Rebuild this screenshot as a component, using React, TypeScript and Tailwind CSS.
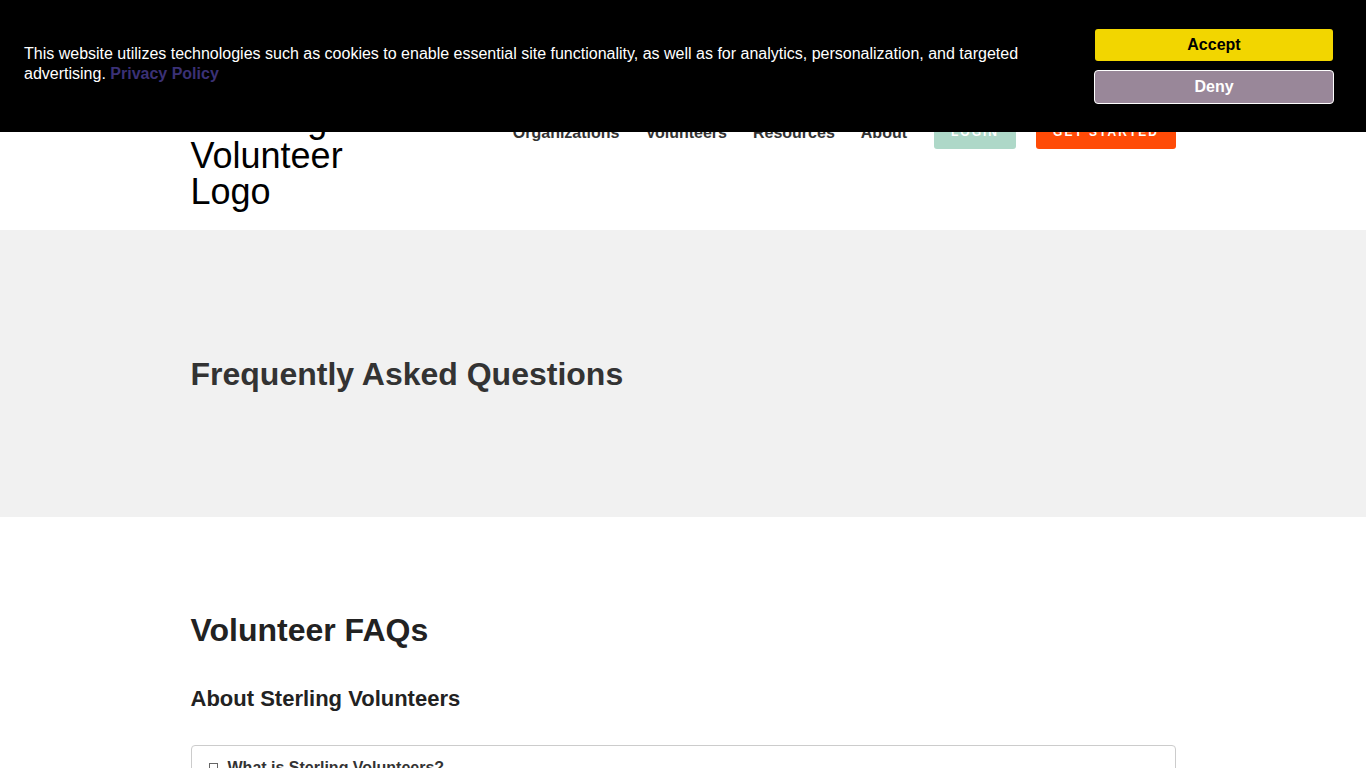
import React from 'react';

const font = { fontFamily: '"Liberation Sans", Arial, sans-serif' };

const CookieBanner: React.FC = () => (
  <div className="absolute top-0 left-0 w-full h-[132px] bg-black flex items-center justify-between pl-6 pr-8 z-50">
    <p className="w-[1010px] mb-1 text-white text-base leading-5">
      This website utilizes technologies such as cookies to enable essential site functionality, as well as for analytics, personalization, and targeted advertising.{' '}
      <a className="font-bold text-[#3b3176]">Privacy Policy</a>
    </p>
    <div className="w-[240px] flex flex-col items-center gap-[9px]">
      <button className="w-[238px] h-8 rounded-[3px] bg-[#f2d600] text-black text-base font-bold">Accept</button>
      <button className="w-[240px] h-[34px] rounded-[4px] border border-white bg-[#998799] text-white text-base font-bold">Deny</button>
    </div>
  </div>
);

const Header: React.FC = () => (
  <header className="h-[230px] bg-white">
    <div className="w-[985.5px] ml-[190.5px] flex justify-between">
      <div className="w-[200px] pt-[102px] text-[36px] leading-9 text-black">
        <span className="tracking-[2.1px]">Sterling</span> Volunteer Logo
      </div>
      <nav className="pt-[113px] flex items-start">
        <div className="flex gap-[26px] h-[36px] pt-1 items-center mr-[27px] text-base font-bold text-[#333333]">
          <a>Organizations</a>
          <a>Volunteers</a>
          <a>Resources</a>
          <a>About</a>
        </div>
        <a className="w-[82px] h-[36px] pt-[2px] flex items-center justify-center rounded-[3px] bg-[#aed8c8] text-white text-xs font-bold tracking-[2px]">LOGIN</a>
        <a className="w-[140px] h-[36px] pt-[2px] ml-5 flex items-center justify-center rounded-[3px] bg-[#ff4b07] text-white text-xs font-bold tracking-[2px]">GET STARTED</a>
      </nav>
    </div>
  </header>
);

export default function App() {
  return (
    <div className="relative h-screen overflow-hidden bg-white" style={font}>
      <CookieBanner />
      <Header />
      <section className="h-[287px] bg-[#f1f1f1] flex items-center pl-[190.5px]">
        <h1 className="text-[32px] leading-10 font-bold text-[#333333]">Frequently Asked Questions</h1>
      </section>
      <main className="w-[985.5px] ml-[190.5px] pt-[93px]">
        <h2 className="text-[32px] leading-10 font-bold text-[#222222]">Volunteer FAQs</h2>
        <h3 className="mt-[35px] text-[22px] leading-[28px] font-bold text-[#222222]">About Sterling Volunteers</h3>
        <div className="mt-8 h-[60px] border border-[#cccccc] rounded-[4px] pl-[17px] pt-3 flex items-start gap-[10px]">
          <span className="w-[9px] h-[11px] mt-[5px] border border-[#666666]"></span>
          <span className="text-base leading-5 font-bold text-[#333333]">What is Sterling Volunteers?</span>
        </div>
      </main>
    </div>
  );
}
